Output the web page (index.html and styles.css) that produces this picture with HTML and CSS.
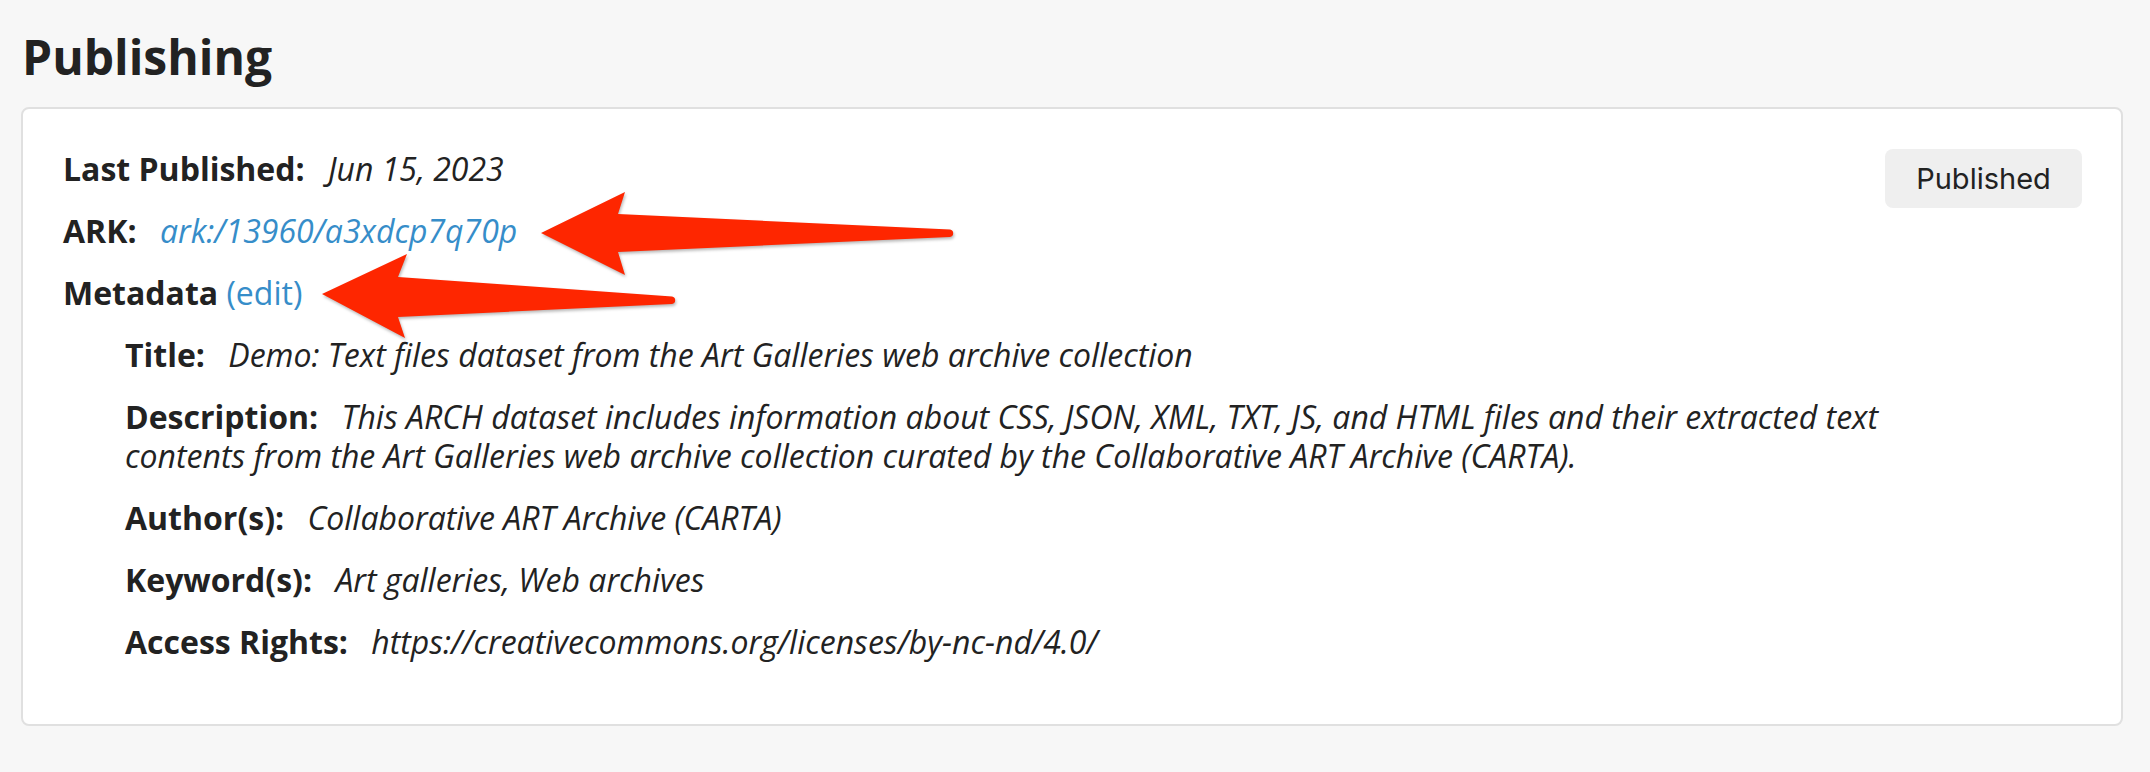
FILE: index.html
```html
<!DOCTYPE html>
<html lang="en">
<head>
<meta charset="utf-8">
<title>Publishing</title>
<link rel="stylesheet" href="styles.css">
</head>
<body>
<div class="page">
  <h1 class="title">Publishing</h1>
  <section class="card">
    <div class="info">
      <p class="row"><span class="label colon">Last Published:</span> <em class="val">Jun 15, 2023</em></p>
      <p class="row"><span class="label colon">ARK:</span> <a class="val link" href="#">ark:/13960/a3xdcp7q70p</a></p>
      <p class="row"><span class="label">Metadata</span> <a class="link" href="#">(edit)</a></p>
      <div class="meta">
        <p class="row"><span class="label colon">Title:</span> <em class="val">Demo: Text files dataset from the Art Galleries web archive collection</em></p>
        <p class="row"><span class="label colon">Description:</span> <em class="val">This ARCH dataset includes information about CSS, JSON, XML, TXT, JS, and HTML files and their extracted text contents from the Art Galleries web archive collection curated by the Collaborative ART Archive (CARTA).</em></p>
        <p class="row"><span class="label colon">Author(s):</span> <em class="val">Collaborative ART Archive (CARTA)</em></p>
        <p class="row"><span class="label colon">Keyword(s):</span> <em class="val">Art galleries, Web archives</em></p>
        <p class="row"><span class="label colon">Access Rights:</span> <em class="val">https://creativecommons.org/licenses/by-nc-nd/4.0/</em></p>
      </div>
    </div>
    <button class="status" type="button">Published</button>
  </section>
  <svg class="annot" viewBox="0 0 2150 772" width="2150" height="772" aria-hidden="true">
    <path class="arrow" d="M541 233 L625 192 L618 214 L950 229.5 A3.8 3.8 0 0 1 950 237 L618 252 L625 275 Z"/>
    <path class="arrow" d="M322 294 L407 254 L398 277 L672 296.5 A3.8 3.8 0 0 1 672 304 L398 317 L405 338 Z"/>
  </svg>
</div>
</body>
</html>
```
FILE: styles.css
```css
html, body {
  margin: 0;
  padding: 0;
  background: #f7f7f7;
}

body {
  font-family: "Open Sans", "Noto Sans", sans-serif;
  color: #222;
}

.page {
  position: relative;
  padding: 0 27px 0 21px;
  height: 772px;
  box-sizing: border-box;
  overflow: hidden;
}

.title {
  margin: 0;
  padding: 28px 0 21px 1px;
  font-size: 48px;
  line-height: 58px;
  font-weight: 700;
  color: #222;
}

.card {
  display: flex;
  align-items: flex-start;
  background: #fff;
  border: 2px solid #e0e0e0;
  border-radius: 8px;
  padding: 40px 39px 40px 40px;
}

.info {
  flex: 1;
  min-width: 0;
}

.row {
  margin: 0 0 23px;
  font-size: 32px;
  line-height: 39px;
}

.label {
  font-weight: 700;
}

.label.colon {
  margin-right: 15px;
}

.val {
  font-style: italic;
}

.link {
  color: #368dc9;
  text-decoration: none;
}

.meta {
  padding-left: 62px;
}

.status {
  flex: none;
  width: 197px;
  height: 59px;
  padding: 0;
  border: none;
  border-radius: 8px;
  background: #efefef;
  color: #222;
  font-family: "Inter", "Liberation Sans", sans-serif;
  font-size: 29px;
}

.annot {
  position: absolute;
  left: 0;
  top: 0;
  pointer-events: none;
}

.arrow {
  fill: #fe2600;
  filter: drop-shadow(1px 2px 1.5px rgba(0, 0, 0, 0.28));
}
```
